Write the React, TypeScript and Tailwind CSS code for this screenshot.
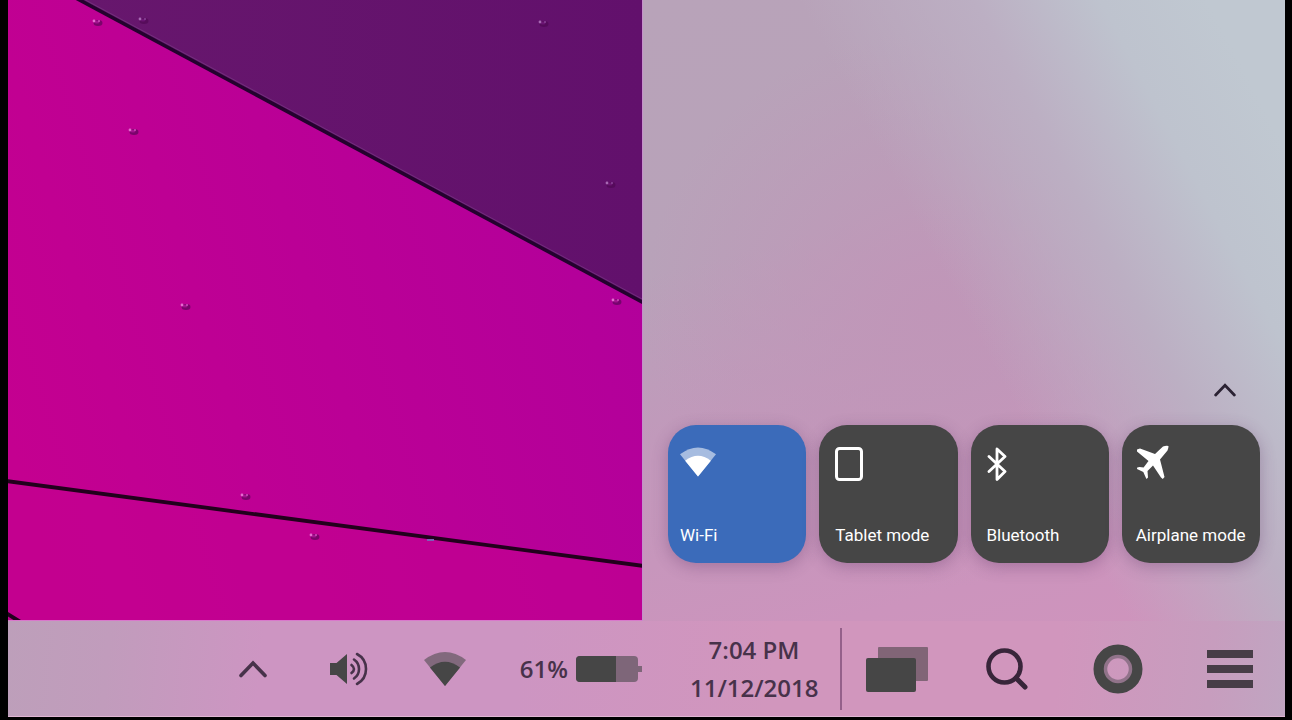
import React from "react";

const droplets = [
  { x: 89, y: 22, dark: false },
  { x: 135, y: 20, dark: true },
  { x: 125, y: 131, dark: false },
  { x: 177, y: 306, dark: false },
  { x: 237, y: 496, dark: false },
  { x: 306, y: 536, dark: false },
  { x: 535, y: 23, dark: true },
  { x: 602, y: 184, dark: true },
  { x: 608, y: 301, dark: false },
];

const Wallpaper: React.FC = () => (
  <svg
    className="min-w-0 flex-1"
    viewBox="0 0 634 620"
    preserveAspectRatio="xMaxYMax slice"
    aria-hidden="true"
  >
    <defs>
      <linearGradient id="pink" x1="0" y1="0.7" x2="1" y2="0.4">
        <stop offset="0" stopColor="#c40090" />
        <stop offset="0.5" stopColor="#bb0096" />
        <stop offset="1" stopColor="#b2009b" />
      </linearGradient>
      <linearGradient id="plum" x1="0" y1="0" x2="1" y2="0">
        <stop offset="0" stopColor="#67176d" />
        <stop offset="1" stopColor="#62106c" />
      </linearGradient>
    </defs>
    <rect width="634" height="621" fill="url(#pink)" />
    <path d="M0 480L634 566V621H0Z" fill="#c3008f" opacity="0.6" />
    <path d="M68 -2L634 302V-2Z" fill="url(#plum)" />
    <path d="M70 -4L636 300" stroke="#7f4a8c" strokeWidth="1" opacity="0.5" />
    <path d="M66 -3L636 303" stroke="#24022e" strokeWidth="3.6" />
    <path d="M-2 481L636 566" stroke="#22001c" strokeWidth="3.8" />
    <path d="M-2 613L14 623" stroke="#22001c" strokeWidth="4" />
    {droplets.map((d) => (
      <g key={`${d.x}-${d.y}`}>
        <ellipse cx={d.x + 1} cy={d.y + 1} rx="4.5" ry="3" fill="#4c0650" opacity="0.6" />
        <ellipse cx={d.x} cy={d.y} rx="2.5" ry="1.5" fill={d.dark ? "#6b1573" : "#a3128f"} />
        <circle cx={d.x - 3} cy={d.y - 1} r="1.4" fill={d.dark ? "#a768b3" : "#e56bd0"} />
        <circle cx={d.x + 2} cy={d.y - 1} r="1" fill={d.dark ? "#8a4398" : "#d04fbd"} />
      </g>
    ))}
    <path d="M419 540h7" stroke="#7d5fb8" strokeWidth="2" />
  </svg>
);

const Chevron: React.FC<{ className: string }> = ({ className }) => (
  <svg className={className} viewBox="0 0 28 18" fill="none" aria-hidden="true">
    <path d="M2 15.5L14 3L26 15.5" stroke="currentColor" strokeWidth="3.6" strokeLinecap="round" />
  </svg>
);

const WifiIcon: React.FC<{ className: string }> = ({ className }) => (
  <svg className={className} viewBox="0 0 42 34" fill="currentColor" aria-hidden="true">
    <path d="M0 8Q21 -8 42 8L21 34Z" opacity="0.55" />
    <path d="M6 15.5Q21 4 36 15.5L21 34Z" />
  </svg>
);

const TabletIcon = () => (
  <svg className="h-[34px] w-7" viewBox="0 0 28 34" fill="none" aria-hidden="true">
    <rect x="1.5" y="1.5" width="25" height="31" rx="3" stroke="currentColor" strokeWidth="3" />
  </svg>
);

const BluetoothIcon = () => (
  <svg className="h-[34px] w-5" viewBox="0 0 20 34" fill="none" aria-hidden="true">
    <path
      d="M2 9.5L18 24.5L10 32.5V2L18 9.5L2 24.5"
      stroke="currentColor"
      strokeWidth="2.8"
      strokeLinecap="round"
      strokeLinejoin="round"
    />
  </svg>
);

const AirplaneIcon = () => (
  <svg
    className="h-[34px] w-[34px] overflow-visible"
    viewBox="0 2 34 34"
    fill="currentColor"
    aria-hidden="true"
  >
    <path d="M1 4.5L4 3.5L19 9L27 1.500Q30 .5 32.500 1Q32.500 3.500 31.500 5.500L24 14.500L28.500 32L26.800 34L25 32.500L17 20.500L11.500 26L12 32.500L10.500 34L9.500 32L7.300 27L1 24L1.200 22.500L3.500 22L7.600 22.500L12.500 16L1 6.500Z" />
  </svg>
);

const tiles = [
  {
    label: "Wi-Fi",
    icon: <WifiIcon className="h-[30px] w-9" />,
    active: true,
    pad: "pl-3",
  },
  { label: "Tablet mode", icon: <TabletIcon />, active: false, pad: "pl-4" },
  { label: "Bluetooth", icon: <BluetoothIcon />, active: false, pad: "pl-4" },
  { label: "Airplane mode", icon: <AirplaneIcon />, active: false, pad: "pl-3.5" },
];

const ActionCenter: React.FC = () => (
  <section
    aria-label="Action center"
    className="flex w-[643px] shrink-0 flex-col justify-end border-l border-[#c58ecb] bg-[linear-gradient(62deg,transparent_50%,#bcafc3_68%,#bec3ce_81%,#c0c8d1_92%),radial-gradient(ellipse_45%_45%_at_45%_50%,#c096b8_0%,transparent_100%),linear-gradient(165deg,#b8a3b9_0%,#b8a2b9_35%,#c298bb_58%,#cc94bd_85%,#cf94bc_100%)] px-[25px] pb-[58px]"
  >
    <button
      type="button"
      aria-label="Collapse"
      className="mr-6 mb-7 self-end text-[#2b2233]"
    >
      <Chevron className="h-[14px] w-[22px]" />
    </button>
    <div className="grid grid-cols-4 gap-[13px]">
      {tiles.map((tile) => (
        <button
          key={tile.label}
          type="button"
          aria-pressed={tile.active}
          className={`flex aspect-square flex-col items-start justify-between rounded-[28px] pt-[22px] pb-4 font-[Roboto,sans-serif] text-[17px] leading-6 whitespace-nowrap text-white shadow-[0_4px_16px_rgba(80,40,90,0.3)] ${
            tile.active ? "bg-[#3b6bba]" : "bg-[#464646]"
          } ${tile.pad}`}
        >
          {tile.icon}
          <span>{tile.label}</span>
        </button>
      ))}
    </div>
  </section>
);

const Taskbar: React.FC = () => (
  <footer className="flex h-24 shrink-0 items-center justify-end border-b border-[#e0b5d3] bg-[linear-gradient(95deg,#bd9fba_0%,#c19cbc_8%,#cd95c2_20%,#cd95c2_40%,#d196bd_60%,#d196bd_82%,#c79dbe_94%,#c0a5c1_100%)] pr-8 text-[#464646]">
    <button type="button" aria-label="Show hidden icons" className="mr-[62px] text-[#47324a]">
      <Chevron className="h-[18px] w-7" />
    </button>

    <button type="button" aria-label="Volume" className="mr-[55px]">
      <svg className="h-[34px] w-10" viewBox="0 0 40 34" fill="none" aria-hidden="true">
        <path d="M1 11H7.500L18 2V32L7.500 23H1Z" fill="currentColor" />
        <g stroke="#47324a" strokeWidth="2.600" strokeLinecap="round">
          <path d="M22.500 13Q27.500 17 22.500 21" />
          <path d="M25 7.500A11.500 11.500 0 0 1 25 26.500" />
          <path d="M28 2A17 17 0 0 1 28 32" />
        </g>
      </svg>
    </button>

    <button type="button" aria-label="Wi-Fi" className="mr-[54px]">
      <WifiIcon className="h-[34px] w-[42px]" />
    </button>

    <div className="mr-12 flex items-center gap-2">
      <span className="text-2xl font-semibold text-[#47324a]">61%</span>
      <svg className="h-[26px] w-[66px]" viewBox="0 0 66 26" aria-hidden="true">
        <rect width="62" height="26" rx="4" fill="#7e6679" />
        <rect x="61" y="10" width="5" height="6" fill="#7e6679" />
        <path d="M4 0H40V26H4Q0 26 0 22V4Q0 0 4 0Z" fill="#464646" />
      </svg>
    </div>

    <div className="mr-[22px] w-32 text-center text-2xl leading-[38px] font-semibold whitespace-nowrap text-[#47324a]">
      <p>7:04 PM</p>
      <p>11/12/2018</p>
    </div>

    <div className="mr-6 h-[82px] w-0.5 bg-[#94608a]" />

    <button type="button" aria-label="Task view" className="mr-[58px]">
      <svg className="h-[46px] w-[62px]" viewBox="0 0 62 46" aria-hidden="true">
        <rect x="12" y="1" width="50" height="34" rx="1" fill="#816577" />
        <rect y="12" width="50" height="34" rx="2" fill="#464646" />
      </svg>
    </button>

    <button type="button" aria-label="Search" className="mr-[65px] text-[#38253a]">
      <svg className="h-[42px] w-[42px]" viewBox="0 0 42 42" fill="none" aria-hidden="true">
        <circle cx="18.500" cy="18.500" r="16" stroke="currentColor" strokeWidth="4.600" />
        <path d="M30 30L39 39" stroke="currentColor" strokeWidth="5" strokeLinecap="round" />
      </svg>
    </button>

    <button type="button" aria-label="Assistant" className="mr-16">
      <svg className="h-[50px] w-[50px]" viewBox="0 0 50 50" fill="none" aria-hidden="true">
        <circle cx="25" cy="25" r="18.500" stroke="#464646" strokeWidth="12" />
        <circle cx="25" cy="25" r="12.500" stroke="#91738a" strokeWidth="3.500" />
      </svg>
    </button>

    <button type="button" aria-label="Menu" className="flex w-[46px] flex-col gap-[7px]">
      <span className="h-2 w-full bg-[#473d47]" />
      <span className="h-2 w-full bg-[#473d47]" />
      <span className="h-2 w-full bg-[#473d47]" />
    </button>
  </footer>
);

const App: React.FC = () => {
  return (
    <div className="flex h-screen flex-col bg-black pr-[7px] pb-[3px] pl-2 font-['Open_Sans',sans-serif]">
      <main className="flex min-h-0 flex-1">
        <div className="flex min-w-0 flex-1 border-b border-[#d977cb]">
          <Wallpaper />
        </div>
        <ActionCenter />
      </main>
      <Taskbar />
    </div>
  );
};

export default App;
